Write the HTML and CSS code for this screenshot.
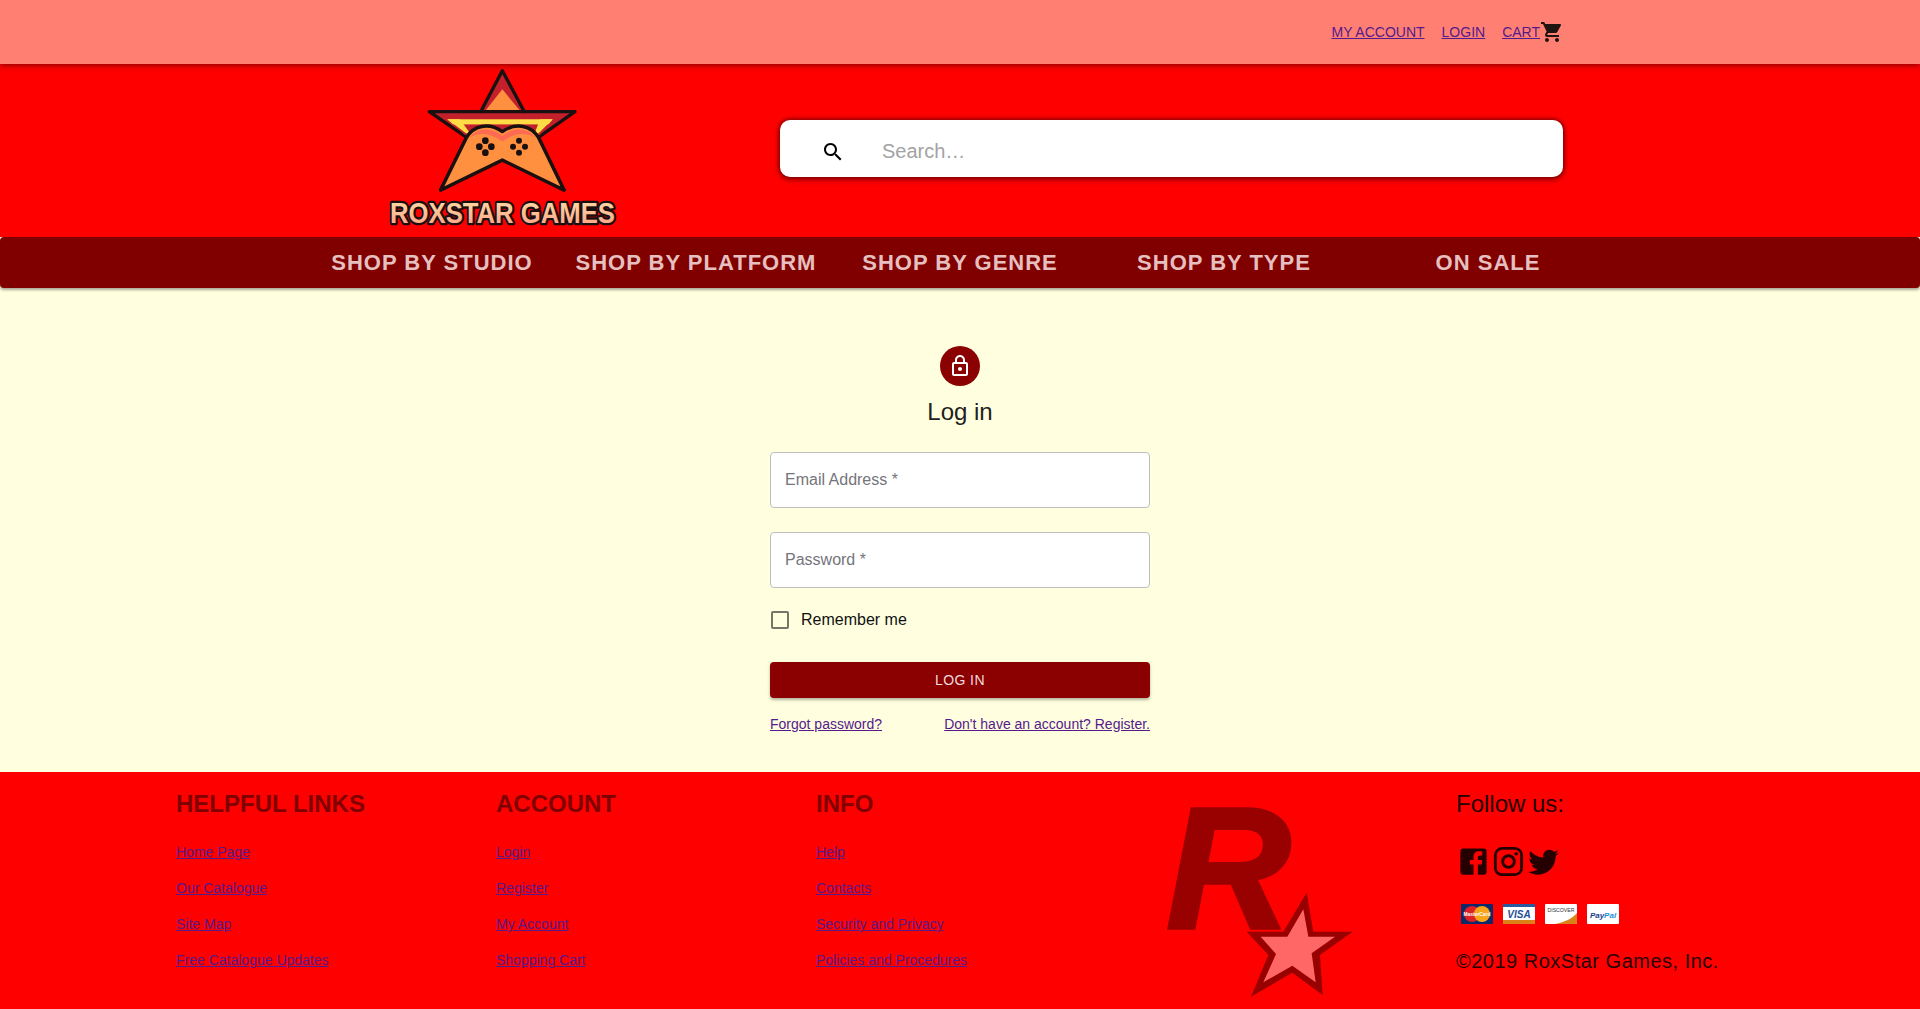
FILE: index.html
```html
<!DOCTYPE html>
<html lang="en">
<head>
    <meta charset="UTF-8">
    <meta name="viewport" content="width=device-width, initial-scale=1.0">
    <title>RoxStar Games - Log in</title>
    <link rel="stylesheet" href="styles.css">
</head>
<body>
    <div class="topbar">
        <a href="#">My Account</a>
        <a href="#">Login</a>
        <span class="cart-link">
            <a href="#">Cart</a>
            <svg class="cart-icon" viewBox="0 0 24 24"><path d="M7 18c-1.1 0-1.99.9-1.99 2S5.9 22 7 22s2-.9 2-2-.9-2-2-2zM1 2v2h2l3.6 7.59-1.35 2.45c-.16.28-.25.61-.25.96 0 1.1.9 2 2 2h12v-2H7.42c-.14 0-.25-.11-.25-.25l.03-.12.9-1.63h7.45c.75 0 1.41-.41 1.75-1.03l3.58-6.47c.08-.14.12-.31.12-.48 0-.55-.45-1-1-1H5.21l-.94-2H1zm16 16c-1.1 0-1.99.9-1.99 2s.89 2 1.99 2 2-.9 2-2-.9-2-2-2z"/></svg>
        </span>
    </div>

    <header class="header">
        <svg class="logo" viewBox="78 54 696 480">
            <defs>
                <linearGradient id="logoText" x1="0" y1="0" x2="0" y2="1">
                    <stop offset="0" stop-color="#ffe2a8"/>
                    <stop offset="1" stop-color="#ff9c84"/>
                </linearGradient>
                <linearGradient id="hatBand" x1="0" y1="0" x2="0" y2="1">
                    <stop offset="0" stop-color="#ffdc45"/>
                    <stop offset="0.3" stop-color="#ffdc45"/>
                    <stop offset="0.35" stop-color="#c3202c"/>
                    <stop offset="1" stop-color="#c3202c"/>
                </linearGradient>
            </defs>
            <polygon points="427,62 493,185 645,185 535,262 612,420 427,330 242,420 320,262 208,185 362,185" fill="#c3202c" stroke="#1a1010" stroke-width="10" stroke-linejoin="round"/>
            <polygon points="427,118 376,182 480,182" fill="#ff9040"/>
            <polygon points="262,208 578,208 540,255 315,255" fill="url(#hatBand)"/>
            <line x1="362" y1="185" x2="493" y2="185" stroke="#1a1010" stroke-width="10"/>
            <polygon points="262,208 300,208 330,250 318,250" fill="#ffdc45"/>
            <polygon points="578,208 540,208 524,250 536,250" fill="#ffdc45"/>
            <path d="M242 420 L320 262 C340 228 385 215 427 245 C469 215 514 228 535 262 L612 420 L427 330 Z" fill="#ff9040" stroke="#1a1010" stroke-width="10" stroke-linejoin="round"/>
            <path d="M330 262 C350 235 390 228 427 258 C464 228 504 235 524 262 C490 245 460 250 427 275 C394 250 364 245 330 262 Z" fill="#ff6a55"/>
            <g fill="#1a1010">
                <circle cx="376" cy="272" r="10"/><circle cx="358" cy="290" r="10"/>
                <circle cx="394" cy="290" r="10"/><circle cx="376" cy="308" r="10"/>
                <circle cx="477" cy="272" r="9"/><circle cx="459" cy="290" r="9"/>
                <circle cx="495" cy="290" r="9"/><circle cx="477" cy="308" r="9"/>
            </g>
            <text class="logo-text" x="90" y="520" textLength="675" lengthAdjust="spacingAndGlyphs">ROXSTAR GAMES</text>
        </svg>
        <div class="search">
            <svg class="search-icon" viewBox="0 0 24 24"><path d="M15.5 14h-.79l-.28-.27C15.41 12.59 16 11.11 16 9.5 16 5.91 13.09 3 9.5 3S3 5.91 3 9.5 5.91 16 9.5 16c1.61 0 3.09-.59 4.23-1.57l.27.28v.79l5 4.99L20.49 19l-4.99-5zm-6 0C7.01 14 5 11.99 5 9.5S7.01 5 9.5 5 14 7.01 14 9.5 11.99 14 9.5 14z"/></svg>
            <input class="search-input" type="text" placeholder="Search…">
        </div>
    </header>

    <nav class="nav">
        <a href="#">Shop by Studio</a>
        <a href="#">Shop by Platform</a>
        <a href="#">Shop by Genre</a>
        <a href="#">Shop by Type</a>
        <a href="#">On Sale</a>
    </nav>

    <main class="main">
        <div class="avatar">
            <svg viewBox="0 0 24 24"><path d="M18 8h-1V6c0-2.76-2.24-5-5-5S7 3.24 7 6v2H6c-1.1 0-2 .9-2 2v10c0 1.1.9 2 2 2h12c1.1 0 2-.9 2-2V10c0-1.1-.9-2-2-2zM9 6c0-1.66 1.34-3 3-3s3 1.34 3 3v2H9V6zm9 14H6V10h12v10zm-6-3c1.1 0 2-.9 2-2s-.9-2-2-2-2 .9-2 2 .9 2 2 2z"/></svg>
        </div>
        <h1 class="title">Log in</h1>
        <form class="login-form">
            <input class="field" type="email" placeholder="Email Address *">
            <input class="field" type="password" placeholder="Password *">
            <label class="remember"><input class="checkbox" type="checkbox"> Remember me</label>
            <button class="submit" type="button">Log in</button>
            <div class="form-links">
                <a href="#">Forgot password?</a>
                <a href="#">Don't have an account? Register.</a>
            </div>
        </form>
    </main>

    <footer class="footer">
        <div class="col">
            <h3>Helpful Links</h3>
            <ul>
                <li><a href="#">Home Page</a></li>
                <li><a href="#">Our Catalogue</a></li>
                <li><a href="#">Site Map</a></li>
                <li><a href="#">Free Catalogue Updates</a></li>
            </ul>
        </div>
        <div class="col">
            <h3>Account</h3>
            <ul>
                <li><a href="#">Login</a></li>
                <li><a href="#">Register</a></li>
                <li><a href="#">My Account</a></li>
                <li><a href="#">Shopping Cart</a></li>
            </ul>
        </div>
        <div class="col">
            <h3>Info</h3>
            <ul>
                <li><a href="#">Help</a></li>
                <li><a href="#">Contacts</a></li>
                <li><a href="#">Security and Privacy</a></li>
                <li><a href="#">Policies and Procedures</a></li>
            </ul>
        </div>
        <div class="col">
            <svg class="brand-mark" viewBox="0 0 720 687">
                <text class="brand-r" x="78" y="445">R</text>
                <polygon points="500,338 520,455 638,455 540,525 548,645 457,578 333,650 385,525 320,455 430,455" fill="#990000"/>
                <polygon points="490,388 505,470 585,470 515,520 527,607 457,557 370,607 408,522 362,470 442,470" fill="#ff6666"/>
            </svg>
        </div>
        <div class="col">
            <div class="follow">Follow us:</div>
            <div class="social">
                <svg viewBox="0 0 24 24"><path d="M5 3h14a2 2 0 0 1 2 2v14a2 2 0 0 1-2 2h-4v-7h2.6l.4-3H15V9.2c0-.9.3-1.4 1.5-1.4H18V5.1c-.3 0-1.2-.1-2.2-.1-2.2 0-3.8 1.3-3.8 3.8V11H9.5v3H12v7H5a2 2 0 0 1-2-2V5a2 2 0 0 1 2-2z"/></svg>
                <svg viewBox="0 0 24 24"><path d="M7.8 2h8.4C19.4 2 22 4.600 22 7.800v8.400a5.800 5.800 0 0 1-5.800 5.800H7.800C4.600 22 2 19.400 2 16.200V7.800A5.800 5.800 0 0 1 7.800 2zm-.2 2A3.600 3.600 0 0 0 4 7.600v8.800C4 18.390 5.610 20 7.600 20h8.800a3.600 3.600 0 0 0 3.600-3.600V7.600C20 5.610 18.390 4 16.400 4H7.600zm9.650 1.500a1.250 1.250 0 1 1 0 2.500 1.250 1.250 0 0 1 0-2.500zM12 7a5 5 0 1 1 0 10 5 5 0 0 1 0-10zm0 2a3 3 0 1 0 0 6 3 3 0 0 0 0-6z"/></svg>
                <svg viewBox="0 0 24 24"><path d="M22.46 6c-.77.35-1.6.58-2.46.69.88-.53 1.56-1.37 1.88-2.38-.83.5-1.75.85-2.72 1.05C18.37 4.5 17.26 4 16 4c-2.35 0-4.27 1.92-4.27 4.29 0 .34.04.67.11.98C8.28 9.09 5.11 7.38 3 4.79c-.37.63-.58 1.37-.58 2.15 0 1.49.75 2.81 1.91 3.56-.71 0-1.37-.2-1.95-.5v.03c0 2.08 1.48 3.82 3.44 4.21a4.22 4.22 0 0 1-1.93.07 4.28 4.28 0 0 0 4 2.98 8.521 8.521 0 0 1-5.33 1.84c-.34 0-.68-.02-1.02-.06C3.44 20.29 5.7 21 8.12 21 16 21 20.33 14.46 20.33 8.79c0-.19 0-.37-.01-.56.84-.6 1.56-1.36 2.14-2.23z"/></svg>
            </div>
            <div class="cards">
                <svg viewBox="0 0 32 20">
                    <rect width="32" height="20" rx="1" fill="#0b2a6b"/>
                    <circle cx="11" cy="10" r="8" fill="#dd1f26"/>
                    <circle cx="21" cy="10" r="8" fill="#f9a51a"/>
                    <text class="card-mc" x="16" y="11.500" textLength="27" lengthAdjust="spacingAndGlyphs">MasterCard</text>
                </svg>
                <svg viewBox="0 0 32 20">
                    <rect width="32" height="20" rx="1" fill="#fff"/>
                    <rect width="32" height="3" fill="#2a5a9e"/>
                    <rect y="16" width="32" height="4" fill="#db8118"/>
                    <text class="card-visa" x="16" y="14">VISA</text>
                </svg>
                <svg viewBox="0 0 32 20">
                    <rect width="32" height="20" rx="1" fill="#fff"/>
                    <path d="M32 9v10a1 1 0 0 1-1 1H10C20 18 28 14 32 9z" fill="#db8118"/>
                    <text class="card-disc" x="16" y="8" textLength="27" lengthAdjust="spacingAndGlyphs">DISCOVER</text>
                </svg>
                <svg viewBox="0 0 32 20">
                    <rect width="32" height="20" rx="1" fill="#fff"/>
                    <text class="card-pp" x="16" y="13.500"><tspan fill="#1c3c8c">Pay</tspan><tspan fill="#1f8fd6">Pal</tspan></text>
                </svg>
            </div>
            <div class="copyright">©2019 RoxStar Games, Inc.</div>
        </div>
    </footer>
</body>
</html>
```

FILE: styles.css
```css
* {
    box-sizing: border-box;
}

html, body {
    height: 100%;
}

body {
    margin: 0;
    display: flex;
    flex-direction: column;
    background-color: #ffffe0;
    color: #212121;
    font-family: "Liberation Sans", Arial, sans-serif;
    overflow: hidden;
}

a {
    color: #551a8b;
}

/* top bar */
.topbar {
    position: relative;
    z-index: 3;
    height: 64px;
    display: flex;
    justify-content: flex-end;
    align-items: center;
    gap: 17px;
    padding-right: 356px;
    background-color: #ff8073;
    box-shadow: 0 2px 4px -1px rgba(0, 0, 0, 0.3), 0 4px 5px rgba(0, 0, 0, 0.14);
    font-size: 14px;
    text-transform: uppercase;
}

.cart-link {
    display: flex;
    align-items: center;
}

.cart-icon {
    width: 24px;
    height: 24px;
    fill: #1f1410;
}

/* logo + search */
.header {
    height: 173px;
    display: flex;
    justify-content: space-between;
    padding: 4px 357px 0 386px;
    background-color: #ff0000;
}

.logo {
    width: 232px;
    height: 160px;
}

.logo-text {
    font-family: "Liberation Sans", Arial, sans-serif;
    font-weight: 700;
    font-size: 88px;
    fill: url(#logoText);
    stroke: #1a1010;
    stroke-width: 14px;
    paint-order: stroke;
    stroke-linejoin: round;
}

.search {
    width: 783px;
    height: 57px;
    margin-top: 52px;
    display: flex;
    align-items: center;
    padding: 6px 0 0 41px;
    background-color: #fff;
    border-radius: 10px;
    box-shadow: 0 0 4px 1px rgba(110, 0, 0, 0.9), 0 3px 6px rgba(0, 0, 0, 0.3);
}

.search-icon {
    width: 24px;
    height: 24px;
    flex: none;
}

.search-input {
    flex: 1;
    margin-left: 35px;
    border: none;
    outline: none;
    background: transparent;
    font-family: inherit;
    font-size: 20px;
}

.search-input::placeholder {
    color: #a3a3a3;
    opacity: 1;
}

/* main nav */
.nav {
    position: relative;
    z-index: 2;
    height: 51px;
    display: grid;
    grid-template-columns: repeat(5, 264px);
    justify-content: center;
    align-items: center;
    background-color: #800000;
    border-radius: 4px;
    box-shadow: 0 2px 3px rgba(0, 0, 0, 0.35);
}

.nav a {
    text-align: center;
    color: #e6c0c0;
    font-size: 22px;
    font-weight: 700;
    letter-spacing: 1px;
    text-transform: uppercase;
    text-decoration: none;
}

/* login */
.main {
    height: 484px;
    display: flex;
    flex-direction: column;
    align-items: center;
    padding-top: 58px;
}

.avatar {
    width: 40px;
    height: 40px;
    display: flex;
    align-items: center;
    justify-content: center;
    border-radius: 50%;
    background-color: #8b0000;
}

.avatar svg {
    width: 24px;
    height: 24px;
    fill: #fff;
}

.title {
    margin: 8px 0 22px;
    font-size: 24px;
    font-weight: 400;
    line-height: 36px;
}

.login-form {
    width: 380px;
    display: flex;
    flex-direction: column;
}

.field {
    height: 56px;
    margin-bottom: 24px;
    padding: 0 14px;
    background-color: #fff;
    border: 1px solid #bdbdbd;
    border-radius: 4px;
    font-family: inherit;
    font-size: 16px;
    outline: none;
}

.field::placeholder {
    color: #75757c;
    opacity: 1;
}

.remember {
    display: flex;
    align-items: center;
    gap: 12px;
    height: 24px;
    margin: -4px 0 30px;
    color: #111;
    font-size: 16px;
}

.checkbox {
    appearance: none;
    width: 18px;
    height: 18px;
    margin: 0 0 0 1px;
    border: 2px solid #757568;
    border-radius: 2px;
}

.submit {
    height: 36px;
    background-color: #8b0000;
    color: #f0dcdc;
    border: none;
    border-radius: 4px;
    box-shadow: 0 2px 3px rgba(0, 0, 0, 0.3);
    font-family: inherit;
    font-size: 14px;
    letter-spacing: 0.4px;
    text-transform: uppercase;
}

.form-links {
    display: flex;
    justify-content: space-between;
    margin-top: 18px;
    font-size: 14px;
}

/* footer */
.footer {
    height: 237px;
    display: grid;
    grid-template-columns: repeat(5, 320px);
    padding: 18px 0 0 176px;
    background-color: #ff0000;
}

.col h3 {
    margin: 0 0 16px;
    color: #800000;
    font-size: 24px;
    line-height: 28px;
    text-transform: uppercase;
}

.col ul {
    margin: 0;
    padding: 0;
    list-style: none;
    font-size: 14px;
}

.col li {
    height: 36px;
    line-height: 36px;
}

.brand-mark {
    display: block;
    width: 240px;
    height: 229px;
    margin: -10px 0 0 4px;
}

.brand-r {
    font-family: "Liberation Sans", Arial, sans-serif;
    font-size: 519px;
    font-weight: 700;
    font-style: italic;
    fill: #990000;
    stroke: #990000;
    stroke-width: 10px;
}

.follow {
    color: #260000;
    font-size: 24px;
    line-height: 28px;
}

.social {
    display: flex;
    gap: 0;
    margin-top: 26px;
    padding-left: 0;
}

.social svg {
    width: 35px;
    height: 35px;
    fill: #260000;
}

.cards {
    display: flex;
    gap: 10px;
    margin-top: 25px;
    padding-left: 5px;
}

.cards svg {
    width: 32px;
    height: 20px;
}

.cards text {
    font-family: "Liberation Sans", Arial, sans-serif;
    text-anchor: middle;
}

.card-mc {
    font-size: 5px;
    font-weight: 700;
    fill: #fff;
}

.card-visa {
    font-size: 10px;
    font-weight: 700;
    font-style: italic;
    fill: #1f4f94;
}

.card-disc {
    font-size: 4.500px;
    fill: #333;
}

.card-pp {
    font-size: 8px;
    font-weight: 700;
    font-style: italic;
}

.copyright {
    margin-top: 26px;
    color: #260000;
    font-size: 20px;
    letter-spacing: 0.5px;
}
```
